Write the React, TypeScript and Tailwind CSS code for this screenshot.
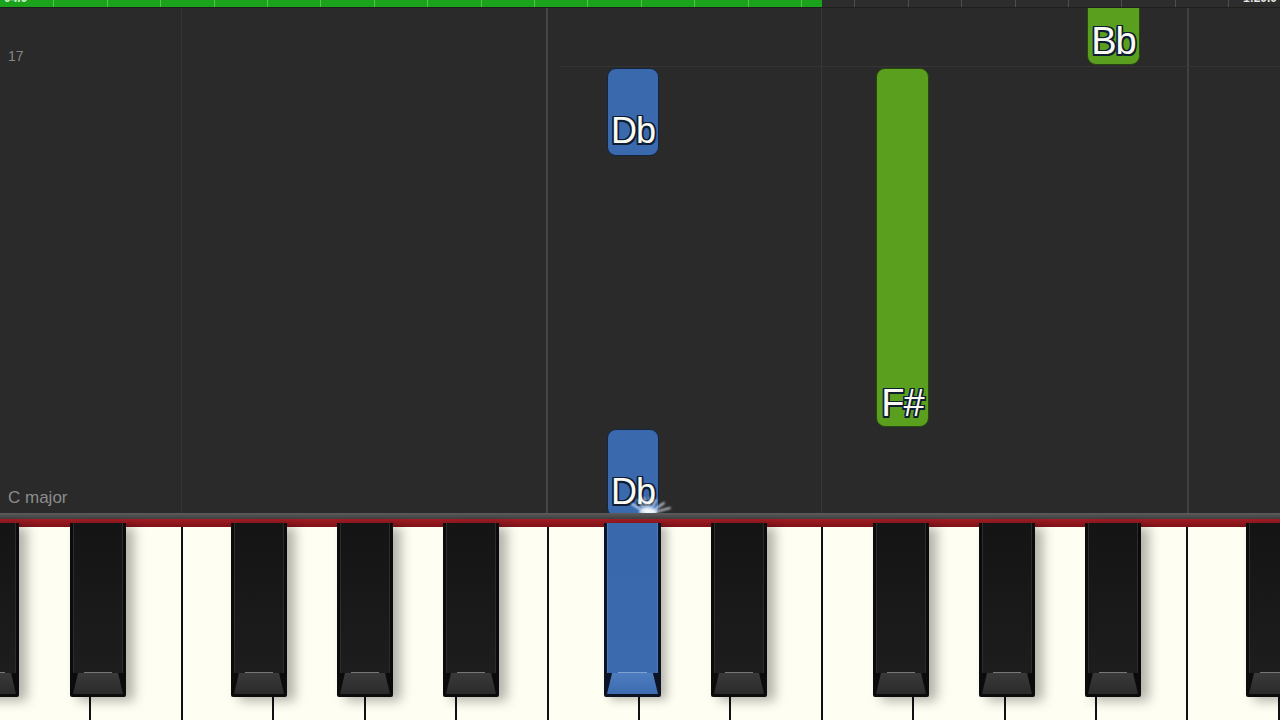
import React from "react";

const FONT = { fontFamily: '"Liberation Sans", Arial, sans-serif' };

type Note = {
  label: string;
  left: number;
  top: number;
  height: number;
  color: "blue" | "green";
  size: number;
};

const notes: Note[] = [
  { label: "Db", left: 607, top: 60, height: 88, color: "blue", size: 36 },
  { label: "Db", left: 607, top: 421, height: 88, color: "blue", size: 36 },
  { label: "F#", left: 876, top: 60, height: 359, color: "green", size: 38 },
  { label: "Bb", left: 1087, top: -12, height: 69, color: "green", size: 38 },
];

const blackKeys = [-37, 70, 231, 337, 443, 604, 711, 873, 979, 1085, 1246];

function NoteBlock({ n }: { n: Note }) {
  const blue = n.color === "blue";
  return (
    <div
      className={
        blue
          ? "absolute w-[52px] rounded-[9px] border border-[#132440] bg-[#3a69ae] flex items-end justify-center pb-[6px]"
          : "absolute w-[53px] rounded-[9px] border border-[#27480d] bg-[#5b9f1e] flex items-end justify-center pb-[4px]"
      }
      style={{ left: n.left, top: n.top, height: n.height }}
    >
      <span
        className="leading-none text-[#fbfbf4] tracking-[-1px] [text-shadow:1.5px_1.5px_0_#0f1d33,-1.5px_-1.5px_0_#0f1d33,1.5px_-1.5px_0_#0f1d33,-1.5px_1.5px_0_#0f1d33,0_1.5px_0_#0f1d33,0_-1.5px_0_#0f1d33,1.5px_0_0_#0f1d33,-1.5px_0_0_#0f1d33]"
        style={{ ...FONT, fontSize: n.size }}
      >
        {n.label}
      </span>
    </div>
  );
}

function BlackKey({ left, pressed }: { left: number; pressed: boolean }) {
  return (
    <div
      className={
        pressed
          ? "absolute top-[-4px] h-[174px] w-[57px] bg-[#0c1424] rounded-b-[2px] shadow-[6px_3px_10px_rgba(0,0,0,0.28)]"
          : "absolute top-[-4px] h-[174px] w-[56px] bg-[#0b0b0b] rounded-b-[2px] shadow-[8px_4px_12px_rgba(0,0,0,0.3)]"
      }
      style={{ left }}
    >
      <div
        className={
          pressed
            ? "absolute left-[3px] right-[3px] top-0 bottom-[24px] bg-gradient-to-b from-[#3a68ad] to-[#3b6aae] border-x border-[#4a78ba]"
            : "absolute left-[3px] right-[3px] top-0 bottom-[24px] bg-gradient-to-b from-[#141414] to-[#1d1d1d] border-x border-[#2c2c2c]"
        }
      />
      <div
        className={
          pressed
            ? "absolute left-[3px] right-[3px] bottom-[3px] h-[21px] bg-gradient-to-b from-[#4d7dbf] to-[#3d6bb0] [clip-path:polygon(10%_0,90%_0,100%_100%,0_100%)]"
            : "absolute left-[3px] right-[3px] bottom-[3px] h-[21px] bg-gradient-to-b from-[#3a3a3a] to-[#2a2a2a] [clip-path:polygon(10%_0,90%_0,100%_100%,0_100%)]"
        }
      />
      <div
        className={
          pressed
            ? "absolute left-[14px] right-[14px] bottom-[24px] h-px bg-[#7fa2d4]"
            : "absolute left-[14px] right-[14px] bottom-[24px] h-px bg-[#777777]"
        }
      />
    </div>
  );
}

export default function App() {
  const ticks = Array.from({ length: 24 }, (_, i) => Math.round((i + 1) * 53.4));
  return (
    <div
      className="w-[1280px] h-[720px] overflow-hidden flex flex-col bg-[#2a2a2a]"
      style={FONT}
    >
      {/* top timeline bar */}
      <div className="relative h-[8px] shrink-0 border-b border-[#1e1e1e] overflow-hidden">
        <svg width="1280" height="7" className="block">
          <rect x="0" y="0" width="822" height="7" fill="#1ba41b" />
          <rect x="822" y="0" width="458" height="7" fill="#2d2d2d" />
          {ticks.map((x) => (
            <rect
              key={x}
              x={x}
              y="0"
              width="1"
              height="7"
              fill={x < 822 ? "#52c452" : "#4e4e4e"}
            />
          ))}
        </svg>
        <span className="absolute left-[4px] top-[-8px] text-[12px] leading-none font-bold text-[#d4f2d4]">
          04.0
        </span>
        <span className="absolute right-[3px] top-[-8px] text-[12px] leading-none font-bold text-[#e6e6e6]">
          1:20.0
        </span>
      </div>

      {/* piano roll */}
      <div className="relative flex-1 overflow-hidden">
        <div className="flex h-full">
          <div className="w-[182px] border-r border-[#343434] flex flex-col justify-between pl-[8px] pt-[41px] pb-[7px]">
            <span className="text-[14px] leading-none text-[#858585]">17</span>
            <span className="text-[17px] leading-none text-[#8c8c8c]">C major</span>
          </div>
          <div className="w-[366px] border-r-2 border-[#464646]" />
          <div className="w-[274px] border-r border-[#373737]" />
          <div className="w-[367px] border-r-2 border-[#414141]" />
          <div className="flex-1" />
        </div>
        <div className="absolute left-[560px] right-0 top-[58px] h-px bg-[#343434]" />
        {notes.map((n, i) => (
          <NoteBlock key={i} n={n} />
        ))}
        <svg
          width="50"
          height="24"
          viewBox="0 0 50 24"
          className="absolute left-[624px] top-[482px]"
        >
          <defs>
            <filter id="glow" x="-50%" y="-50%" width="200%" height="200%">
              <feGaussianBlur stdDeviation="0.8" />
            </filter>
          </defs>
          <g stroke="#e4f0ff" strokeWidth="1.6" strokeLinecap="round" filter="url(#glow)">
            <line x1="24" y1="24" x2="8" y2="14" />
            <line x1="24" y1="24" x2="14" y2="10" />
            <line x1="24" y1="24" x2="20" y2="8" />
            <line x1="24" y1="24" x2="26" y2="8" />
            <line x1="24" y1="24" x2="32" y2="10" />
            <line x1="24" y1="24" x2="40" y2="13" />
            <line x1="24" y1="24" x2="46" y2="18" />
          </g>
          <ellipse cx="24" cy="22" rx="9" ry="4" fill="#ffffff" opacity="0.7" filter="url(#glow)" />
        </svg>
      </div>

      {/* separator bars */}
      <div className="h-[6px] shrink-0 bg-gradient-to-b from-[#5c5c5c] to-[#404040]" />
      <div className="h-[8px] shrink-0 bg-gradient-to-b from-[#a31d24] to-[#7e1218]" />

      {/* keyboard */}
      <div className="relative h-[193px] shrink-0">
        <div className="flex h-full">
          {Array.from({ length: 14 }, (_, i) => (
            <div key={i} className="flex-1 bg-[#fefef2] border-r-2 border-[#111111]" />
          ))}
        </div>
        {blackKeys.map((l) => (
          <BlackKey key={l} left={l} pressed={l === 604} />
        ))}
      </div>
    </div>
  );
}
